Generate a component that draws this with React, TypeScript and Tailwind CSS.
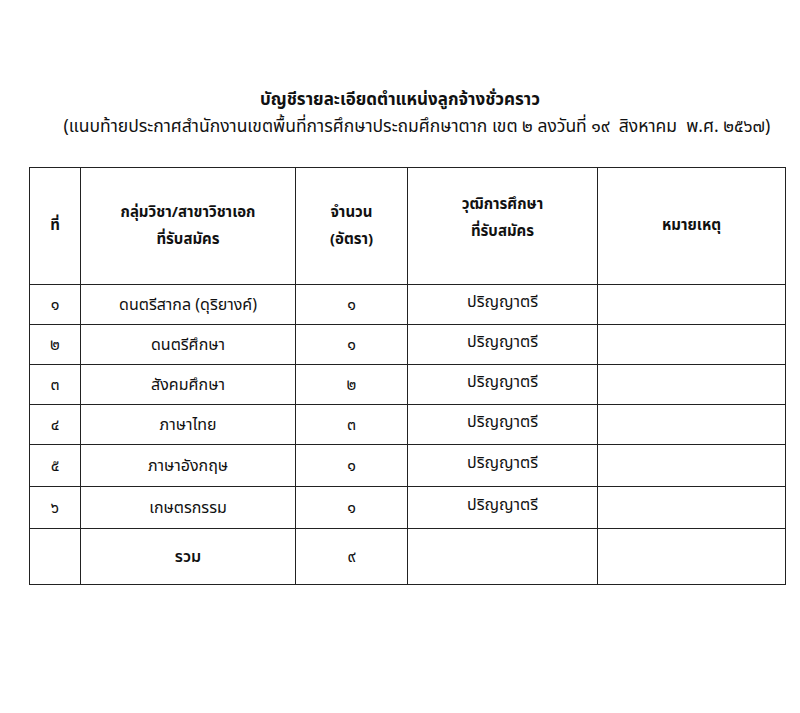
const rows = [
  { no: "๑", subject: "ดนตรีสากล (ดุริยางค์)", count: "๑", degree: "ปริญญาตรี" },
  { no: "๒", subject: "ดนตรีศึกษา", count: "๑", degree: "ปริญญาตรี" },
  { no: "๓", subject: "สังคมศึกษา", count: "๒", degree: "ปริญญาตรี" },
  { no: "๔", subject: "ภาษาไทย", count: "๓", degree: "ปริญญาตรี" },
  { no: "๕", subject: "ภาษาอังกฤษ", count: "๑", degree: "ปริญญาตรี" },
  { no: "๖", subject: "เกษตรกรรม", count: "๑", degree: "ปริญญาตรี" },
];

const cell = "border border-[#222] text-center align-middle";

export default function App() {
  return (
    <div className="w-[800px] h-[713px] overflow-hidden bg-white text-[#111] font-['Noto_Sans_Thai','Loma','Garuda','Noto_Sans',sans-serif] pt-[87px]">
      <div className="w-[800px] text-center">
        <h1 className="text-[17px] font-bold leading-[26px]">
          บัญชีรายละเอียดตำแหน่งลูกจ้างชั่วคราว
        </h1>
        <p className="text-[17.5px] leading-[28px] whitespace-pre pl-[34px]">
          (แนบท้ายประกาศสำนักงานเขตพื้นที่การศึกษาประถมศึกษาตาก เขต ๒ ลงวันที่ ๑๙  สิงหาคม  พ.ศ. ๒๕๖๗)
        </p>
      </div>

      <table className="ml-[29px] mt-[26px] border-collapse table-fixed w-[756px] text-[16px]">
        <colgroup>
          <col className="w-[51px]" />
          <col className="w-[215px]" />
          <col className="w-[112px]" />
          <col className="w-[190px]" />
          <col className="w-[188px]" />
        </colgroup>
        <thead>
          <tr className="h-[117px] font-medium text-[15px]">
            <th className={cell}>ที่</th>
            <th className={cell}>
              <div className="leading-[27px]">กลุ่มวิชา/สาขาวิชาเอก</div>
              <div className="leading-[27px]">ที่รับสมัคร</div>
            </th>
            <th className={cell}>
              <div className="leading-[27px]">จำนวน</div>
              <div className="leading-[27px]">(อัตรา)</div>
            </th>
            <th className={cell}>
              <div className="leading-[27px] -mt-[16px]">วุฒิการศึกษา</div>
              <div className="leading-[27px]">ที่รับสมัคร</div>
            </th>
            <th className={cell}>หมายเหตุ</th>
          </tr>
        </thead>
        <tbody>
          {rows.map((r, i) => (
            <tr key={r.no} className={i >= 4 ? "h-[42px]" : "h-[40px]"}>
              <td className={cell}>{r.no}</td>
              <td className={cell}>{r.subject}</td>
              <td className={cell}>{r.count}</td>
              <td className={`${cell} pb-[6px]`}>{r.degree}</td>
              <td className={cell}></td>
            </tr>
          ))}
          <tr className="h-[56px]">
            <td className={cell}></td>
            <td className={`${cell} font-semibold`}>รวม</td>
            <td className={cell}>๙</td>
            <td className={cell}></td>
            <td className={cell}></td>
          </tr>
        </tbody>
      </table>
    </div>
  );
}
